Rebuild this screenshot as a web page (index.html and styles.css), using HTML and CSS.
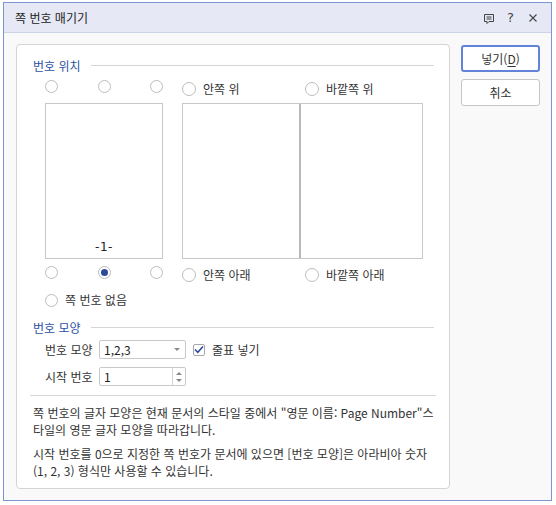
FILE: index.html
```html
<!DOCTYPE html>
<html lang="ko">
<head>
<meta charset="utf-8">
<title>쪽 번호 매기기</title>
<link rel="stylesheet" href="styles.css">
</head>
<body>
<div class="dialog">
  <div class="titlebar">
    <span class="title">쪽 번호 매기기</span>
    <div class="title-icons">
      <svg class="ic-comment" width="12" height="12" viewBox="0 0 12 12"><path d="M1.5 1.5h9v7h-4.5l-2 2v-2h-2.5z" fill="none" stroke="#444" stroke-width="1"/><path d="M3.5 4h5M3.5 6h5" stroke="#444" stroke-width="1"/></svg>
      <span class="ic-help">?</span>
      <svg class="ic-close" width="8" height="8" viewBox="0 0 8 8"><path d="M0.5 0.5l7 7M7.5 0.5l-7 7" stroke="#444" stroke-width="1.1"/></svg>
    </div>
  </div>
  <div class="content">
    <div class="group">
      <div class="legend"><span>번호 위치</span></div>
      <div class="positions">
        <div class="single">
          <div class="radio-row top"><span class="radio"></span><span class="radio"></span><span class="radio"></span></div>
          <div class="page"><span class="pnum">-1-</span></div>
          <div class="radio-row bottom"><span class="radio"></span><span class="radio checked"></span><span class="radio"></span></div>
        </div>
        <div class="spread">
          <div class="spread-row top">
            <label class="opt wide"><span class="radio"></span>안쪽 위</label>
            <label class="opt"><span class="radio"></span>바깥쪽 위</label>
          </div>
          <div class="spread-pages"><div class="pg left"></div><div class="pg right"></div></div>
          <div class="spread-row bottom">
            <label class="opt wide"><span class="radio"></span>안쪽 아래</label>
            <label class="opt"><span class="radio"></span>바깥쪽 아래</label>
          </div>
        </div>
      </div>
      <label class="opt none"><span class="radio"></span>쪽 번호 없음</label>
      <div class="legend second"><span>번호 모양</span></div>
      <div class="form-row first">
        <span class="lbl">번호 모양</span>
        <div class="combo"><span>1,2,3</span><span class="arrow"></span></div>
        <span class="check"><svg width="10" height="9" viewBox="0 0 10 9"><path d="M1 4.5l2.8 2.8L9 1.5" fill="none" stroke="#2c4c9c" stroke-width="1.6"/></svg></span>
        <span class="check-label">줄표 넣기</span>
      </div>
      <div class="form-row second">
        <span class="lbl">시작 번호</span>
        <div class="spin"><span class="spin-val">1</span><span class="spin-btns"><span class="up"></span><span class="down"></span></span></div>
      </div>
      <div class="sep"></div>
      <p class="desc first">쪽 번호의 글자 모양은 현재 문서의 스타일 중에서 "영문 이름: Page Number"스타일의 영문 글자 모양을 따라갑니다.</p>
      <p class="desc">시작 번호를 0으로 지정한 쪽 번호가 문서에 있으면 [번호 모양]은 아라비아 숫자 (1, 2, 3) 형식만 사용할 수 있습니다.</p>
    </div>
    <div class="buttons">
      <button class="btn primary">넣기(<u>D</u>)</button>
      <button class="btn">취소</button>
    </div>
  </div>
</div>
</body>
</html>
```
FILE: styles.css
```css
* { box-sizing: border-box; }
body {
  margin: 0;
  background: #fff;
  font-family: "Noto Sans CJK KR", sans-serif;
  font-size: 12px;
  color: #333;
}
.dialog {
  margin: 2px 0 0 3px;
  width: 549px;
  height: 499px;
  border: 1px solid #7d95d3;
  background: #f9f9f9;
  display: flex;
  flex-direction: column;
}
.titlebar {
  height: 30px;
  flex: none;
  background: #e6e9f5;
  border-bottom: 1px solid #cdd3e6;
  display: flex;
  align-items: center;
  padding: 0 14px 0 11px;
}
.title { color: #222; font-size: 12px; line-height: 16px; }
.title-icons { margin-left: auto; display: flex; align-items: center; }
.ic-comment { display: block; margin-top: 2px; }
.ic-help { margin-left: 12px; width: 6px; font-size: 13px; line-height: 14px; color: #444; font-family: "DejaVu Sans", sans-serif; }
.ic-close { display: block; margin-left: 16px; }

.content {
  flex: 1;
  display: flex;
  padding: 11px 11px 11px 12px;
  gap: 11px;
}
.group {
  width: 434px;
  height: 445px;
  border: 1px solid #d4d4d4;
  border-radius: 4px;
  background: #fff;
  padding: 12px 15px 0 16px;
}
.legend {
  display: flex;
  align-items: center;
  height: 16px;
  color: #2b4fa5;
}
.legend::after {
  content: "";
  flex: 1;
  height: 1px;
  background: #d6d6d6;
  margin-left: 10px;
}
.legend.second { margin-top: 12px; }

.positions {
  display: flex;
  gap: 19px;
  margin: 7px 0 0 12px;
  height: 201px;
}
.single { width: 118px; }
.radio-row { display: flex; justify-content: space-between; height: 13px; }
.radio-row.bottom { margin-top: 7px; }
.page {
  margin-top: 10px;
  height: 156px;
  border: 1px solid #c8c8c8;
  display: flex;
  flex-direction: column;
  justify-content: flex-end;
  align-items: center;
  padding-bottom: 4px;
}
.pnum { line-height: 14px; color: #222; font-family: "DejaVu Sans", sans-serif; font-size: 12px; letter-spacing: 0.5px; }

.radio {
  display: inline-block;
  flex: none;
  width: 13px;
  height: 13px;
  border: 1px solid #bdbdbd;
  border-radius: 50%;
  background: #fff;
  position: relative;
}
.radio.checked::after {
  content: "";
  position: absolute;
  left: 2px; top: 2px;
  width: 7px; height: 7px;
  border-radius: 50%;
  background: #2c4a9b;
}

.spread { width: 241px; }
.spread-row { display: flex; }
.spread-row.top { height: 23px; padding-top: 2px; }
.spread-row.bottom { padding-top: 9px; }
.opt { display: flex; align-items: center; gap: 7px; line-height: 14px; height: 14px; color: #333; }
.opt .radio { width: 14px; height: 14px; }
.opt.wide { width: 123px; }
.spread-pages {
  display: flex;
  height: 156px;
  border: 1px solid #c8c8c8;
}
.pg.left { width: 118px; border-right: 2px solid #b8b8b8; }
.pg.right { flex: 1; }

.opt.none { margin: 12px 0 0 12px; }
.opt.none .radio { width: 13px; height: 13px; }

.form-row { display: flex; align-items: center; height: 19px; margin-left: 12px; }
.form-row.first { margin-top: 5px; }
.form-row.second { margin-top: 8px; }
.lbl { width: 54px; color: #333; }
.combo, .spin {
  width: 87px;
  height: 19px;
  border: 1px solid #c9c9c9;
  border-radius: 2px;
  background: #fff;
  display: flex;
  align-items: center;
  padding-left: 4px;
  color: #222;
}
.combo span:first-child { flex: 1; }
.arrow {
  width: 0; height: 0;
  border-left: 3px solid transparent;
  border-right: 3px solid transparent;
  border-top: 3px solid #8a8a8a;
  margin-right: 5px;
}
.check {
  margin-left: 7px;
  width: 12px; height: 12px;
  border: 1px solid #a8a8a8;
  border-radius: 2px;
  display: flex;
  align-items: center;
  justify-content: center;
}
.check svg { display: block; }
.check-label { margin-left: 7px; }
.spin-val { flex: 1; }
.spin-btns {
  width: 13px;
  height: 100%;
  border-left: 1px solid #d4d4d4;
  display: flex;
  flex-direction: column;
  justify-content: center;
  align-items: center;
  gap: 4px;
}
.up, .down { width: 0; height: 0; border-left: 3px solid transparent; border-right: 3px solid transparent; }
.up { border-bottom: 3px solid #8a8a8a; }
.down { border-top: 3px solid #8a8a8a; }

.sep { margin: 9px -2px 0 -3px; height: 1px; background: #d6d6d6; }
.desc { margin: 7px 0 0 0; line-height: 17px; color: #333; }
.desc.first { margin-top: 8px; }

.buttons { display: flex; flex-direction: column; gap: 7px; width: 79px; margin-top: 1px; }
.btn {
  height: 27px;
  border: 1px solid #c5c5c5;
  border-radius: 3px;
  background: #fff;
  font-family: "Noto Sans CJK KR", sans-serif;
  font-size: 12px;
  color: #333;
  padding: 0;
}
.btn.primary { border: 2px solid #6283d8; }
.btn u { text-underline-offset: 2px; }
```
